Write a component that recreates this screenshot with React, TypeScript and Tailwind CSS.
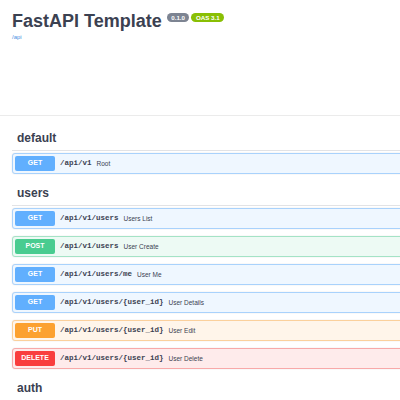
import React from 'react';

type Method = 'GET' | 'POST' | 'PUT' | 'DELETE';

type Endpoint = {
  method: Method;
  path: string;
  summary: string;
};

const methodStyles: Record<Method, { row: string; badge: string }> = {
  GET: { row: 'bg-[#eff7ff] border-[#a9d2fc]', badge: 'bg-[#61affe]' },
  POST: { row: 'bg-[#edfaf4] border-[#a4e3c6]', badge: 'bg-[#49cc90]' },
  PUT: { row: 'bg-[#fff5ea] border-[#fbd09c]', badge: 'bg-[#fca130]' },
  DELETE: { row: 'bg-[#feebeb] border-[#f8a9a9]', badge: 'bg-[#f93e3e]' },
};

const sections: { tag: string; endpoints: Endpoint[] }[] = [
  {
    tag: 'default',
    endpoints: [{ method: 'GET', path: '/api/v1', summary: 'Root' }],
  },
  {
    tag: 'users',
    endpoints: [
      { method: 'GET', path: '/api/v1/users', summary: 'Users List' },
      { method: 'POST', path: '/api/v1/users', summary: 'User Create' },
      { method: 'GET', path: '/api/v1/users/me', summary: 'User Me' },
      { method: 'GET', path: '/api/v1/users/{user_id}', summary: 'User Details' },
      { method: 'PUT', path: '/api/v1/users/{user_id}', summary: 'User Edit' },
      { method: 'DELETE', path: '/api/v1/users/{user_id}', summary: 'User Delete' },
    ],
  },
  { tag: 'auth', endpoints: [] },
];

function OperationRow({ endpoint }: { endpoint: Endpoint }) {
  const style = methodStyles[endpoint.method];
  return (
    <div
      className={`flex items-center h-[21px] mb-[7px] px-[2px] border rounded-[3px] shadow-[0_0_1.5px_rgba(0,0,0,0.12)] ${style.row}`}
    >
      <span
        className={`flex items-center justify-center w-[40px] h-[15px] rounded-[2px] text-[7px] font-bold text-white ${style.badge}`}
      >
        {endpoint.method}
      </span>
      <span className="px-[5px] font-['Liberation_Mono',monospace] font-bold text-[7.5px] text-[#3b4151]">
        {endpoint.path}
      </span>
      <span className="text-[6.5px] text-[#3b4151]">{endpoint.summary}</span>
    </div>
  );
}

export default function App() {
  return (
    <div className="w-[400px] h-[400px] overflow-hidden bg-white text-[#3b4151] font-['Liberation_Sans',Arial,sans-serif]">
      {/* Info */}
      <div className="h-[115px] px-3 pt-3">
        <div className="flex items-start">
          <h1 className="text-[18px] leading-[18px] font-bold text-[#3b4151]">FastAPI Template</h1>
          <span className="ml-[5px] mt-[1px] h-[9px] px-[4.5px] rounded-full bg-[#7d8492] text-white text-[6.2px] font-bold leading-[9px]">
            0.1.0
          </span>
          <span className="ml-[2px] mt-[1px] h-[9px] px-[4.5px] rounded-full bg-[#89bf04] text-white text-[6.2px] font-bold leading-[9px]">
            OAS 3.1
          </span>
        </div>
        <a className="block mt-[4px] text-[6px] leading-[7px] text-[#4990e2]">/api</a>
      </div>
      <div className="h-px bg-[#ebebeb]" />

      {/* Operations */}
      <div className="pl-3 pt-[10px] w-[460px]">
        {sections.map((section) => (
          <section key={section.tag}>
            <h3 className="px-[5px] py-[5px] text-[12px] leading-[14px] font-bold border-b border-[#e2e3e6] mb-[2px]">
              {section.tag}
            </h3>
            {section.endpoints.map((ep, i) => (
              <OperationRow key={i} endpoint={ep} />
            ))}
          </section>
        ))}
      </div>
    </div>
  );
}
